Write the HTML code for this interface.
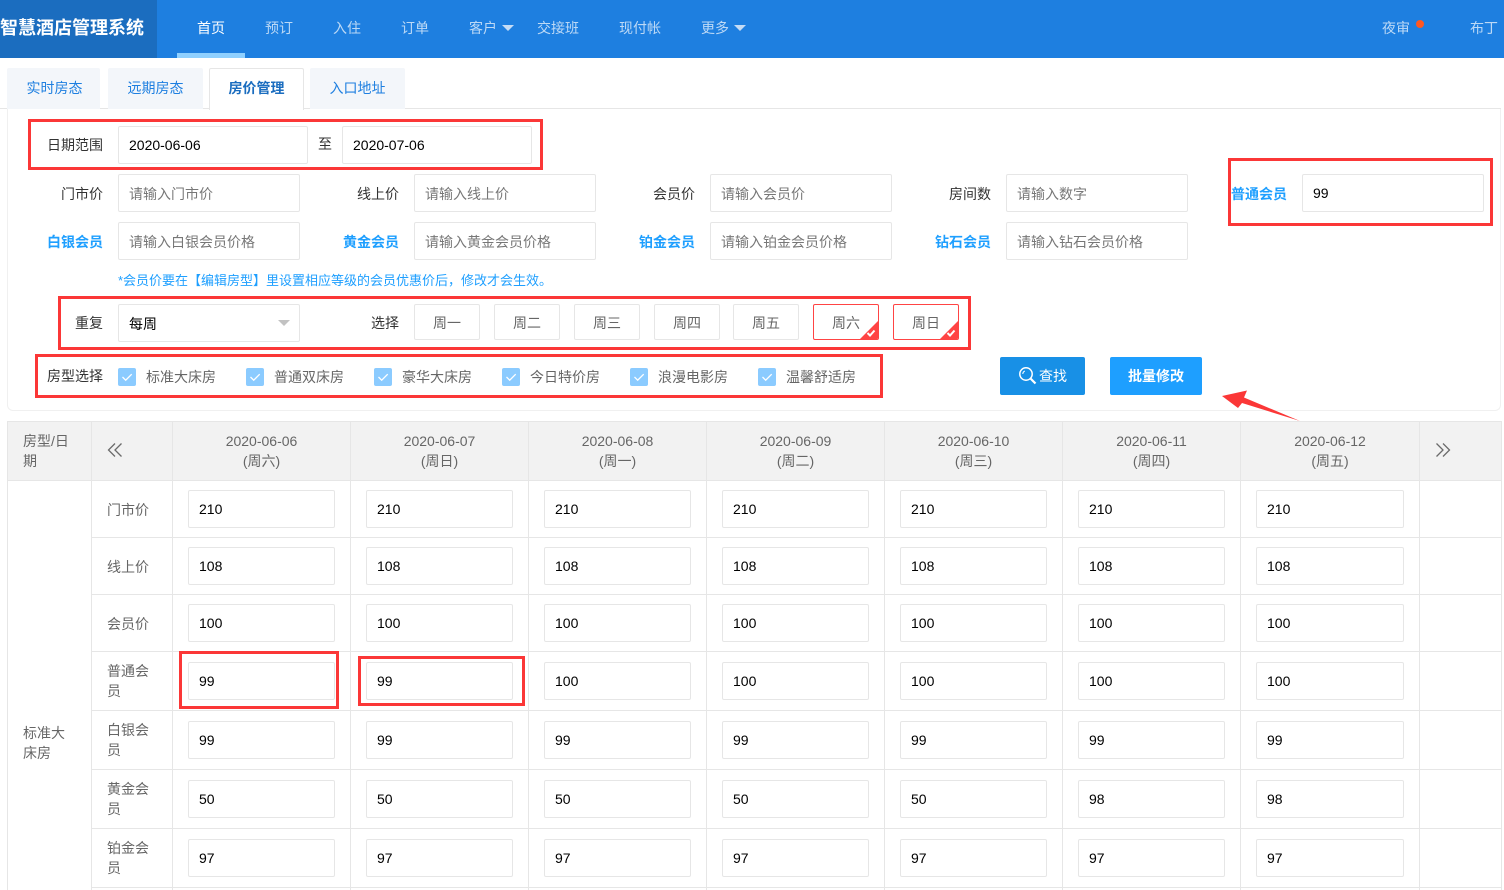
<!DOCTYPE html>
<html lang="zh">
<head>
<meta charset="utf-8">
<title>智慧酒店管理系统</title>
<style>
html,body{margin:0;padding:0;background:#fff}
body{width:1504px;height:890px;position:relative;overflow:hidden;font:14px/20px "Liberation Sans","Noto Sans CJK SC",sans-serif;color:#333}
div,span,b{box-sizing:border-box}
.a{position:absolute}
.t{position:absolute;white-space:nowrap;line-height:20px}
.n{position:absolute;top:18px;white-space:nowrap;color:rgba(255,255,255,.7);transform:translateX(-50%)}
.tab{position:absolute;top:68px;height:41px;background:#f3f6fa;color:#1e7fe0;text-align:center;line-height:40px;border-radius:2px 2px 0 0}
.i{position:absolute;height:38px;border:1px solid #e6e6e6;border-radius:2px;background:#fff;line-height:36px;padding-left:10px;white-space:nowrap;color:#000}
.i.p{color:#777;line-height:38px}
.l{position:absolute;white-space:nowrap;line-height:20px;text-align:right;color:#333}
.bl{color:#1e9fff;font-weight:bold}
.w{position:absolute;top:304px;height:36px;width:66px;border:1px solid #e6e6e6;border-radius:2px;text-align:center;line-height:36px;color:#666;overflow:hidden}
.w.on{border-color:#f44}
.w.on svg{position:absolute;right:0;bottom:0}
.red{position:absolute;border:3px solid #fb3737;pointer-events:none;z-index:5}
.ck{position:absolute;top:368px;width:18px;height:18px;background:#8bcbff;border-radius:2px}
.ck svg{position:absolute;left:0;top:0}
.ct{position:absolute;top:367px;color:#666;white-space:nowrap}
.v{position:absolute;width:1px;top:421px;height:469px;background:#e6e6e6}
.h{position:absolute;height:1px;left:92px;right:3px;background:#e6e6e6}
.d{position:absolute;text-align:center;color:#666;width:178px;top:431px;line-height:20px}
.rl{position:absolute;left:107px;width:50px;color:#666;line-height:20px}
.c1{left:188px;width:147px}.c2{left:366px;width:147px}.c3{left:544px;width:147px}.c4{left:722px;width:147px}
.c5{left:900px;width:147px}.c6{left:1078px;width:147px}.c7{left:1256px;width:148px}
.r1{top:490px}.r2{top:547px}.r3{top:604px}.r4{top:662px}.r5{top:721px}.r6{top:780px}.r7{top:839px}
</style>
</head>
<body>
<!-- header -->
<div class="a" style="left:0;top:0;width:1504px;height:58px;background:#1e7fe0"></div>
<div class="a" style="left:0;top:0;width:157px;height:58px;background:#1b6dbf"></div>
<div class="t" style="left:0;top:17px;font-size:18px;line-height:22px;font-weight:bold;color:#fff">智慧酒店管理系统</div>
<div class="a" style="left:177px;top:53px;width:68px;height:5px;background:#8fd0ff"></div>
<span class="n" style="left:211px;color:#fff">首页</span>
<span class="n" style="left:279px">预订</span>
<span class="n" style="left:347px">入住</span>
<span class="n" style="left:415px">订单</span>
<span class="n" style="left:483px">客户</span>
<div class="a" style="left:502px;top:25px;border:6px solid transparent;border-top:6px solid #c5dcf5;border-bottom:0"></div>
<span class="n" style="left:558px">交接班</span>
<span class="n" style="left:640px">现付帐</span>
<span class="n" style="left:715px">更多</span>
<div class="a" style="left:734px;top:25px;border:6px solid transparent;border-top:6px solid #c5dcf5;border-bottom:0"></div>
<span class="n" style="left:1396px">夜审</span>
<div class="a" style="left:1416px;top:20px;width:8px;height:8px;border-radius:50%;background:#ff5722"></div>
<span class="n" style="left:1484px">布丁</span>

<!-- tabs -->
<div class="a" style="left:7px;top:108px;width:1494px;height:303px;border:1px solid #f0f0f0;border-top-color:#e6e6e6;border-radius:0 0 6px 6px"></div>
<div class="a" style="left:0;top:108px;width:1501px;height:1px;background:#e6e6e6"></div>
<div class="tab" style="left:7px;width:93px;padding-left:2px">实时房态</div>
<div class="tab" style="left:108px;width:95px">远期房态</div>
<div class="tab" style="left:209px;width:95px;background:#fff;border:1px solid #e6e6e6;border-bottom:0;color:#1b6dbf;font-weight:bold;line-height:39px;height:42px">房价管理</div>
<div class="tab" style="left:310px;width:95px">入口地址</div>

<!-- form -->
<div class="l" style="left:47px;top:135px">日期范围</div>
<div class="i" style="left:118px;top:126px;width:190px">2020-06-06</div>
<div class="t" style="left:318px;top:134px">至</div>
<div class="i" style="left:342px;top:126px;width:190px">2020-07-06</div>

<div class="l" style="left:61px;top:184px">门市价</div>
<div class="i p" style="left:118px;top:174px;width:182px">请输入门市价</div>
<div class="l" style="left:357px;top:184px">线上价</div>
<div class="i p" style="left:414px;top:174px;width:182px">请输入线上价</div>
<div class="l" style="left:653px;top:184px">会员价</div>
<div class="i p" style="left:710px;top:174px;width:182px">请输入会员价</div>
<div class="l" style="left:949px;top:184px">房间数</div>
<div class="i p" style="left:1006px;top:174px;width:182px">请输入数字</div>
<div class="l bl" style="left:1231px;top:184px">普通会员</div>
<div class="i" style="left:1302px;top:174px;width:182px">99</div>

<div class="l bl" style="left:47px;top:232px">白银会员</div>
<div class="i p" style="left:118px;top:222px;width:182px">请输入白银会员价格</div>
<div class="l bl" style="left:343px;top:232px">黄金会员</div>
<div class="i p" style="left:414px;top:222px;width:182px">请输入黄金会员价格</div>
<div class="l bl" style="left:639px;top:232px">铂金会员</div>
<div class="i p" style="left:710px;top:222px;width:182px">请输入铂金会员价格</div>
<div class="l bl" style="left:935px;top:232px">钻石会员</div>
<div class="i p" style="left:1006px;top:222px;width:182px">请输入钻石会员价格</div>

<div class="t" style="left:118px;top:271px;font-size:13px;color:#1e9fff">*会员价要在【编辑房型】里设置相应等级的会员优惠价后，修改才会生效。</div>

<div class="l" style="left:75px;top:313px">重复</div>
<div class="i" style="left:118px;top:304px;width:182px;line-height:38px">每周</div>
<div class="a" style="left:278px;top:320px;border:6px solid transparent;border-top:6px solid #c2c2c2;border-bottom:0"></div>
<div class="l" style="left:371px;top:313px">选择</div>
<div class="w" style="left:414px">周一</div>
<div class="w" style="left:494px">周二</div>
<div class="w" style="left:574px">周三</div>
<div class="w" style="left:654px">周四</div>
<div class="w" style="left:733px">周五</div>
<div class="w on" style="left:813px">周六<svg width="18" height="18" viewBox="0 0 18 18"><path d="M18 0V18H0Z" fill="#f44"/><path d="M7.5 12l2.5 2.5 4.5-5" fill="none" stroke="#fff" stroke-width="2"/></svg></div>
<div class="w on" style="left:893px">周日<svg width="18" height="18" viewBox="0 0 18 18"><path d="M18 0V18H0Z" fill="#f44"/><path d="M7.5 12l2.5 2.5 4.5-5" fill="none" stroke="#fff" stroke-width="2"/></svg></div>

<div class="l" style="left:47px;top:366px">房型选择</div>
<div class="ck" style="left:118px"><svg width="18" height="18"><path d="M4.5 9l3.2 3.2 6-6" fill="none" stroke="#fff" stroke-width="1.3"/></svg></div><div class="ct" style="left:146px">标准大床房</div>
<div class="ck" style="left:246px"><svg width="18" height="18"><path d="M4.5 9l3.2 3.2 6-6" fill="none" stroke="#fff" stroke-width="1.3"/></svg></div><div class="ct" style="left:274px">普通双床房</div>
<div class="ck" style="left:374px"><svg width="18" height="18"><path d="M4.5 9l3.2 3.2 6-6" fill="none" stroke="#fff" stroke-width="1.3"/></svg></div><div class="ct" style="left:402px">豪华大床房</div>
<div class="ck" style="left:502px"><svg width="18" height="18"><path d="M4.5 9l3.2 3.2 6-6" fill="none" stroke="#fff" stroke-width="1.3"/></svg></div><div class="ct" style="left:530px">今日特价房</div>
<div class="ck" style="left:630px"><svg width="18" height="18"><path d="M4.5 9l3.2 3.2 6-6" fill="none" stroke="#fff" stroke-width="1.3"/></svg></div><div class="ct" style="left:658px">浪漫电影房</div>
<div class="ck" style="left:758px"><svg width="18" height="18"><path d="M4.5 9l3.2 3.2 6-6" fill="none" stroke="#fff" stroke-width="1.3"/></svg></div><div class="ct" style="left:786px">温馨舒适房</div>

<div class="a" style="left:1000px;top:357px;width:85px;height:38px;background:#1890e6;border-radius:2px"></div>
<svg class="a" style="left:1018px;top:366px" width="20" height="20" viewBox="0 0 20 20"><circle cx="8" cy="8" r="6.2" fill="none" stroke="#fff" stroke-width="1.5"/><path d="M12.5 12.5l5 5" stroke="#fff" stroke-width="2.2"/><path d="M4.8 8a3.4 3.4 0 0 1 2-3" fill="none" stroke="#fff"/></svg>
<div class="t" style="left:1039px;top:366px;color:#fff">查找</div>
<div class="a" style="left:1110px;top:357px;width:92px;height:38px;background:#1e9fff;border-radius:2px"></div>
<div class="t" style="left:1128px;top:366px;color:#fff;font-weight:bold">批量修改</div>

<svg class="a" style="left:1215px;top:388px;z-index:6" width="90" height="36" viewBox="0 0 90 36"><path d="M7 8L32 2.500L29 9.500L85 33L27 15L23 20Z" fill="#fb3737"/></svg>

<!-- table -->
<div class="a" style="left:7px;top:421px;width:1494px;height:60px;background:#f2f2f2"></div>
<div class="a" style="left:7px;top:421px;width:1494px;height:1px;background:#e6e6e6"></div>
<div class="a" style="left:7px;top:480px;width:1494px;height:1px;background:#e6e6e6"></div>
<div class="v" style="left:7px"></div>
<div class="v" style="left:91px"></div>
<div class="v" style="left:172px"></div>
<div class="v" style="left:350px"></div>
<div class="v" style="left:528px"></div>
<div class="v" style="left:706px"></div>
<div class="v" style="left:884px"></div>
<div class="v" style="left:1062px"></div>
<div class="v" style="left:1240px"></div>
<div class="v" style="left:1419px"></div>
<div class="v" style="left:1501px"></div>
<div class="h" style="top:537px"></div>
<div class="h" style="top:594px"></div>
<div class="h" style="top:651px"></div>
<div class="h" style="top:710px"></div>
<div class="h" style="top:769px"></div>
<div class="h" style="top:828px"></div>
<div class="h" style="top:887px"></div>

<div class="t" style="left:23px;top:431px;color:#666">房型/日<br>期</div>
<svg class="a" style="left:107px;top:442px" width="16" height="16" viewBox="0 0 16 16"><path d="M8 1.500L1.500 8L8 14.500M14.500 1.500L8 8L14.500 14.500" fill="none" stroke="#6b6b6b" stroke-width="1.300"/></svg>
<svg class="a" style="left:1435px;top:442px" width="16" height="16" viewBox="0 0 16 16"><path d="M1.500 1.500L8 8L1.500 14.500M8 1.500L14.500 8L8 14.500" fill="none" stroke="#6b6b6b" stroke-width="1.300"/></svg>
<div class="d" style="left:172.500px">2020-06-06<br>(周六)</div>
<div class="d" style="left:350.500px">2020-06-07<br>(周日)</div>
<div class="d" style="left:528.500px">2020-06-08<br>(周一)</div>
<div class="d" style="left:706.500px">2020-06-09<br>(周二)</div>
<div class="d" style="left:884.500px">2020-06-10<br>(周三)</div>
<div class="d" style="left:1062.500px">2020-06-11<br>(周四)</div>
<div class="d" style="left:1241px">2020-06-12<br>(周五)</div>

<div class="t" style="left:23px;top:723px;color:#666">标准大<br>床房</div>
<div class="rl" style="top:500px">门市价</div>
<div class="rl" style="top:557px">线上价</div>
<div class="rl" style="top:614px">会员价</div>
<div class="rl" style="top:661px">普通会<br>员</div>
<div class="rl" style="top:720px">白银会<br>员</div>
<div class="rl" style="top:779px">黄金会<br>员</div>
<div class="rl" style="top:838px">铂金会<br>员</div>

<div class="i c1 r1">210</div><div class="i c2 r1">210</div><div class="i c3 r1">210</div><div class="i c4 r1">210</div><div class="i c5 r1">210</div><div class="i c6 r1">210</div><div class="i c7 r1">210</div>
<div class="i c1 r2">108</div><div class="i c2 r2">108</div><div class="i c3 r2">108</div><div class="i c4 r2">108</div><div class="i c5 r2">108</div><div class="i c6 r2">108</div><div class="i c7 r2">108</div>
<div class="i c1 r3">100</div><div class="i c2 r3">100</div><div class="i c3 r3">100</div><div class="i c4 r3">100</div><div class="i c5 r3">100</div><div class="i c6 r3">100</div><div class="i c7 r3">100</div>
<div class="i c1 r4">99</div><div class="i c2 r4">99</div><div class="i c3 r4">100</div><div class="i c4 r4">100</div><div class="i c5 r4">100</div><div class="i c6 r4">100</div><div class="i c7 r4">100</div>
<div class="i c1 r5">99</div><div class="i c2 r5">99</div><div class="i c3 r5">99</div><div class="i c4 r5">99</div><div class="i c5 r5">99</div><div class="i c6 r5">99</div><div class="i c7 r5">99</div>
<div class="i c1 r6">50</div><div class="i c2 r6">50</div><div class="i c3 r6">50</div><div class="i c4 r6">50</div><div class="i c5 r6">50</div><div class="i c6 r6">98</div><div class="i c7 r6">98</div>
<div class="i c1 r7">97</div><div class="i c2 r7">97</div><div class="i c3 r7">97</div><div class="i c4 r7">97</div><div class="i c5 r7">97</div><div class="i c6 r7">97</div><div class="i c7 r7">97</div>

<!-- red annotation boxes -->
<div class="red" style="left:28px;top:119px;width:515px;height:51px"></div>
<div class="red" style="left:1228px;top:158px;width:265px;height:68px"></div>
<div class="red" style="left:58px;top:296px;width:913px;height:54px"></div>
<div class="red" style="left:35px;top:354px;width:848px;height:44px"></div>
<div class="red" style="left:179px;top:651px;width:160px;height:58px"></div>
<div class="red" style="left:358px;top:656px;width:167px;height:50px"></div>
</body>
</html>
